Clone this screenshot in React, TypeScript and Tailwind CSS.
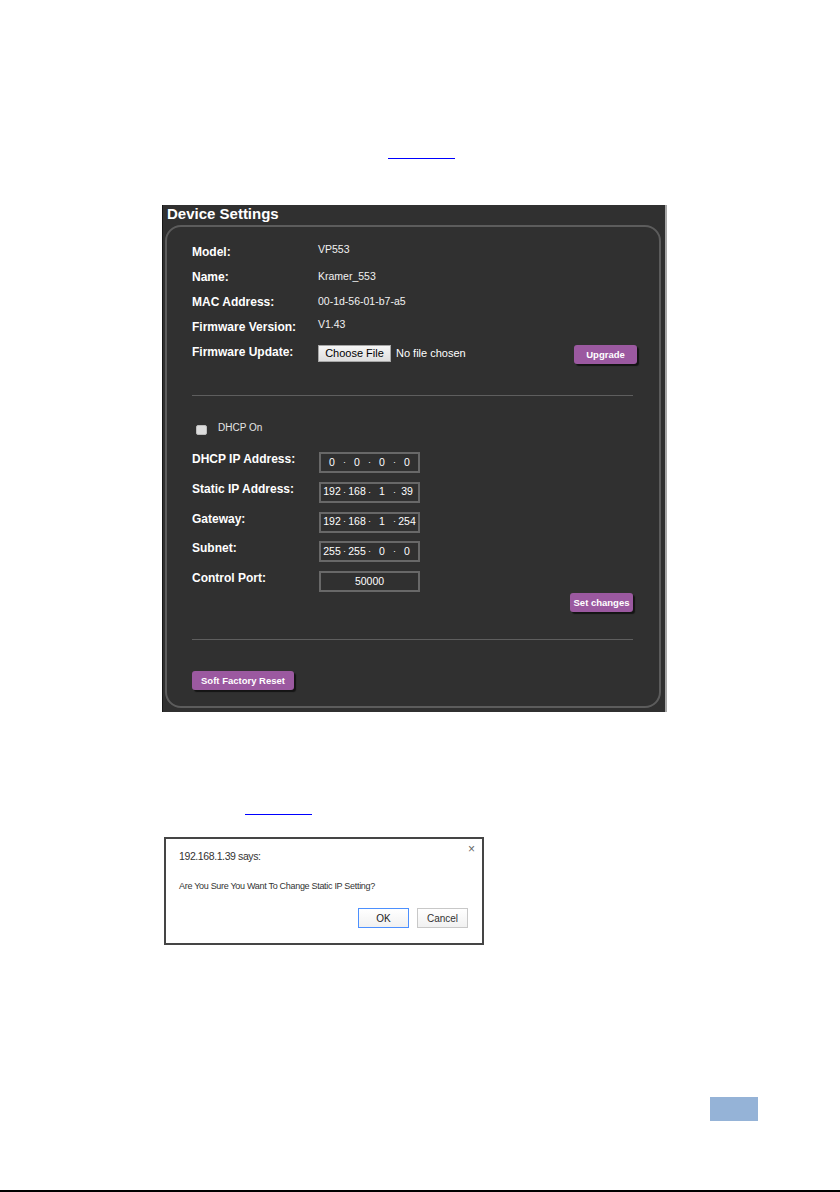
import React from "react";

const font = { fontFamily: '"Liberation Sans", Arial, sans-serif' };

function PurpleButton({ children, className = "" }: { children: React.ReactNode; className?: string }) {
  return (
    <button
      type="button"
      className={
        "h-[19px] rounded-[3px] bg-[#9b59a0] text-[9.5px] font-bold leading-[19px] text-white shadow-[2px_2px_1px_#141414] " +
        className
      }
    >
      {children}
    </button>
  );
}

function InfoRow({ label, children }: { label: string; children: React.ReactNode }) {
  return (
    <div className="flex h-[25px] items-center">
      <div className="w-[126px] shrink-0 text-[12px] font-bold text-white">{label}</div>
      <div className="flex flex-1 items-center text-[10.5px] text-[#f2f2f2]">{children}</div>
    </div>
  );
}

function IpBox({ octets }: { octets: string[] }) {
  return (
    <div className="flex h-[21px] w-[101px] items-center border-2 border-[#686868] text-[10.5px] text-white">
      {octets.map((o, i) => (
        <React.Fragment key={i}>
          {i > 0 && <span className="w-[3px] text-center text-[9px]">·</span>}
          <span className="w-[22px] text-center">{o}</span>
        </React.Fragment>
      ))}
    </div>
  );
}

function NetRow({ label, children }: { label: string; children: React.ReactNode }) {
  return (
    <div className="flex h-[21px] items-start">
      <div className="h-[14px] w-[127px] shrink-0 text-[12px] font-bold leading-[14px] text-white">{label}</div>
      {children}
    </div>
  );
}

export default function App() {
  return (
    <div className="flex h-[1192px] w-[840px] flex-col bg-white" style={font}>
      {/* link underline */}
      <div className="pl-[388px] pt-[144px]">
        <span className="block h-[15px] w-[67px] border-b border-[#0000ff]" />
      </div>

      {/* device settings panel */}
      <div className="ml-[162px] mt-[46px] h-[507px] w-[505px] border-l border-r-2 border-l-[#161616] border-r-[#a8a8a8] bg-[#303030]">
        <div className="h-[20px] pl-[4px] text-[15px] font-bold leading-[18px] text-white">Device Settings</div>

        <div className="ml-[2px] h-[483px] w-[496px] rounded-[16px] border-2 border-[#5c5c5c] pl-[25px] pr-[26px] pt-[12px]">
          <InfoRow label="Model:">
            <span className="-mt-[3px]">VP553</span>
          </InfoRow>
          <InfoRow label="Name:">Kramer_553</InfoRow>
          <InfoRow label="MAC Address:">00-1d-56-01-b7-a5</InfoRow>
          <InfoRow label="Firmware Version:">
            <span className="-mt-[3px]">V1.43</span>
          </InfoRow>
          <InfoRow label="Firmware Update:">
            <button
              type="button"
              className="mt-[3px] h-[17px] w-[73px] border border-[#a6a6a6] bg-gradient-to-b from-[#f6f6f6] to-[#dedede] text-[11px] leading-[15px] text-black"
            >
              Choose File
            </button>
            <span className="ml-[5px] mt-[3px] text-[11px] text-white">No file chosen</span>
            <PurpleButton className="-mr-[4px] ml-auto mt-[6px] w-[63px]">Upgrade</PurpleButton>
          </InfoRow>

          <div className="mt-[31px] h-px bg-[#5e5e5e]" />

          <div className="mt-[25px] flex h-[14px] items-start">
            <span className="ml-[4px] mt-[4px] h-[10px] w-[11px] rounded-[2px] border border-[#bcbcbc] bg-[#dcdcdc]" />
            <span className="ml-[11px] text-[10px] leading-[14px] text-[#e6e6e6]">DHCP On</span>
          </div>

          <div className="mt-[17px] flex flex-col gap-[8.75px]">
            <NetRow label="DHCP IP Address:">
              <IpBox octets={["0", "0", "0", "0"]} />
            </NetRow>
            <NetRow label="Static IP Address:">
              <IpBox octets={["192", "168", "1", "39"]} />
            </NetRow>
            <NetRow label="Gateway:">
              <IpBox octets={["192", "168", "1", "254"]} />
            </NetRow>
            <NetRow label="Subnet:">
              <IpBox octets={["255", "255", "0", "0"]} />
            </NetRow>
            <NetRow label="Control Port:">
              <div className="flex h-[21px] w-[101px] items-center justify-center border-2 border-[#686868] text-[10.5px] text-white">
                50000
              </div>
            </NetRow>
          </div>

          <div className="mt-px flex justify-end">
            <PurpleButton className="w-[63px]">Set changes</PurpleButton>
          </div>

          <div className="mt-[27px] h-px bg-[#5e5e5e]" />

          <PurpleButton className="mt-[31px] w-[102px]">Soft Factory Reset</PurpleButton>
        </div>
      </div>

      {/* second link underline */}
      <div className="pl-[245px] pt-[88px]">
        <span className="block h-[15px] w-[67px] border-b border-[#0000ff]" />
      </div>

      {/* confirm dialog */}
      <div className="relative ml-[164px] mt-[22px] h-[108px] w-[320px] border-2 border-[#454545] bg-white pl-[13px] pr-[14px] pt-[10px] text-[#333]">
        <span className="absolute right-[7px] top-[3px] text-[12px] leading-[14px] text-[#666]">×</span>
        <div className="text-[10.5px] leading-[14px] tracking-[-0.4px]">192.168.1.39 says:</div>
        <div className="mt-[17px] text-[9px] leading-[12px] tracking-[-0.3px]">
          Are You Sure You Want To Change Static IP Setting?
        </div>
        <div className="mt-[16px] flex justify-end gap-[8px]">
          <button
            type="button"
            className="h-[20px] w-[51px] border border-[#4d90fe] bg-gradient-to-b from-white to-[#f1f1f1] text-[10px] text-[#222]"
          >
            OK
          </button>
          <button
            type="button"
            className="h-[20px] w-[51px] border border-[#c8c8c8] bg-gradient-to-b from-white to-[#f1f1f1] text-[10px] text-[#333]"
          >
            Cancel
          </button>
        </div>
      </div>

      {/* page number tab */}
      <div className="ml-[710px] mt-[152px] h-[24px] w-[48px] bg-[#95b3d7]" />

      <div className="mt-auto h-[2px] bg-black" />
    </div>
  );
}
